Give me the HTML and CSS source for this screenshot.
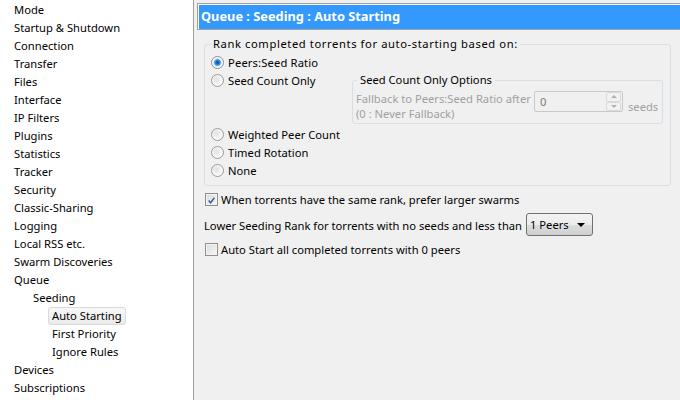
FILE: index.html
```html
<!DOCTYPE html>
<html>
<head>
<meta charset="utf-8">
<link rel="stylesheet" href="styles.css">
</head>
<body>
<div class="app">
  <ul class="tree">
    <li class="l0"><span>Mode</span></li>
    <li class="l0"><span>Startup &amp; Shutdown</span></li>
    <li class="l0"><span>Connection</span></li>
    <li class="l0"><span>Transfer</span></li>
    <li class="l0"><span>Files</span></li>
    <li class="l0"><span>Interface</span></li>
    <li class="l0"><span>IP Filters</span></li>
    <li class="l0"><span>Plugins</span></li>
    <li class="l0"><span>Statistics</span></li>
    <li class="l0"><span>Tracker</span></li>
    <li class="l0"><span>Security</span></li>
    <li class="l0"><span>Classic-Sharing</span></li>
    <li class="l0"><span>Logging</span></li>
    <li class="l0"><span>Local RSS etc.</span></li>
    <li class="l0"><span>Swarm Discoveries</span></li>
    <li class="l0"><span>Queue</span></li>
    <li class="l1"><span>Seeding</span></li>
    <li class="l2"><span class="sel">Auto Starting</span></li>
    <li class="l2"><span>First Priority</span></li>
    <li class="l2"><span>Ignore Rules</span></li>
    <li class="l0"><span>Devices</span></li>
    <li class="l0"><span>Subscriptions</span></li>
  </ul>
  <div class="main">
    <div class="title">Queue : Seeding : Auto Starting</div>
    <fieldset class="group">
      <legend>Rank completed torrents for auto-starting based on:</legend>
      <div class="opt"><span class="radio on"></span><span class="wide">Peers:Seed Ratio</span></div>
      <div class="seedrow">
        <div class="opt seedopt"><span class="radio"></span>Seed Count Only</div>
        <fieldset class="sub">
          <legend>Seed Count Only Options</legend>
          <div class="subrow">
            <div class="dis label">Fallback to Peers:Seed Ratio after<br>(0 : Never Fallback)</div>
            <div class="spin">
              <span class="val">0</span>
              <span class="btns"><span class="btn up"></span><span class="btn down"></span></span>
            </div>
            <div class="dis seeds">seeds</div>
          </div>
        </fieldset>
      </div>
      <div class="opt"><span class="radio"></span>Weighted Peer Count</div>
      <div class="opt"><span class="radio"></span>Timed Rotation</div>
      <div class="opt"><span class="radio"></span>None</div>
    </fieldset>
    <div class="row check-row first"><span class="check"><svg width="13" height="13" viewBox="0 0 13 13"><path d="M3.2 6.6 L5.4 9.2 L9.9 3.2" fill="none" stroke="#3a5a9e" stroke-width="1.7"/></svg></span>When torrents have the same rank, prefer larger swarms</div>
    <div class="row select-row">Lower Seeding Rank for torrents with no seeds and less than
      <div class="select"><span>1 Peers</span><span class="arrow"></span></div>
    </div>
    <div class="row check-row last"><span class="check"></span>Auto Start all completed torrents with 0 peers</div>
  </div>
</div>
</body>
</html>
```
FILE: styles.css
```css
html, body {
  margin: 0;
  padding: 0;
  background: #f0f0f0;
  overflow: hidden;
}
body {
  font-family: "Segoe UI", "Noto Sans", "Open Sans", sans-serif;
  font-size: 11.2px;
  color: #000;
}
.app {
  display: flex;
  height: 400px;
}
.tree {
  width: 194px;
  box-sizing: border-box;
  margin: 0;
  padding: 1px 0 0 0;
  list-style: none;
  background: #fff;
  border-right: 1px solid #a0a0a0;
  flex: none;
}
.tree li {
  height: 18px;
  display: flex;
  align-items: center;
  white-space: nowrap;
}
.tree li span {
  border: 1px solid transparent;
  padding: 0 3px;
  line-height: 16px;
  border-radius: 3px;
}
.tree .l0 { padding-left: 10px; }
.tree .l1 { padding-left: 29px; }
.tree .l2 { padding-left: 48px; }
.tree .sel {
  border-color: #d9d9d9;
  background: linear-gradient(#f8f8f8, #ebebeb);
}
.main {
  flex: 1;
  padding: 3px 0 0 3px;
  min-width: 0;
}
.title {
  height: 27px;
  box-sizing: border-box;
  border: 1px solid #a0a0a0;
  border-right: 0;
  background: #3399ff;
  box-shadow: inset 1px 1px 0 #ffffff;
  color: #fff;
  font-weight: bold;
  font-size: 12.8px;
  padding-left: 3px;
  line-height: 25px;
  white-space: nowrap;
}
fieldset {
  margin: 0;
  border: 1px solid #d5dfe5;
  border-radius: 3px;
  min-width: 0;
}
legend {
  line-height: 16px;
  white-space: nowrap;
}
.group {
  margin: 6px 9px 0 7px;
  padding: 1px 7px 6px 6px;
}
.group > legend {
  padding: 0 2px;
  letter-spacing: 0.6px;
}
.opt {
  height: 18px;
  display: flex;
  align-items: center;
  white-space: nowrap;
  padding-top: 1px;
  box-sizing: border-box;
}
.wide {
  letter-spacing: 0.15px;
}
.radio {
  width: 13px;
  height: 13px;
  box-sizing: border-box;
  border-radius: 50%;
  border: 1px solid #9a9a9a;
  background: radial-gradient(circle at 40% 40%, #e2e2e2 0, #ececec 3px, #f8f8f8 5px);
  margin-right: 4px;
  margin-top: -1px;
  flex: none;
}
.radio.on {
  border-color: #8c8e8f;
  background: radial-gradient(circle at 50% 50%, #0d4a8f 0, #1e6fc9 1.5px, #4aa3f2 3px, #9fd2ff 3.6px, #f4f4f4 4.2px, #ffffff 5.5px);
}
.seedrow {
  display: flex;
  align-items: flex-start;
  margin-bottom: 1px;
}
.seedopt {
  width: 141px;
  flex: none;
}
.sub {
  flex: 1;
  margin-top: 1px;
  padding: 2px 3px 2px 3px;
}
.sub > legend {
  margin-left: 1px;
  padding: 0 3px;
}
.subrow {
  display: flex;
  align-items: center;
}
.dis {
  color: #a0a0a0;
}
.label {
  width: 178px;
  flex: none;
  line-height: 15px;
  padding-top: 1px;
  white-space: nowrap;
}
.spin {
  align-self: flex-start;
  margin-top: 1px;
  width: 89px;
  height: 21px;
  box-sizing: border-box;
  border: 1px solid #c9c9c9;
  border-radius: 2px;
  display: flex;
  align-items: center;
  flex: none;
}
.spin .val {
  flex: 1;
  padding-left: 5px;
  color: #7a7a7a;
}
.btns {
  display: flex;
  flex-direction: column;
  width: 15px;
  height: 19px;
  margin-right: 1px;
}
.btn {
  flex: 1;
  border: 1px solid #dadada;
  border-radius: 2px;
  position: relative;
  background: #f2f2f2;
}
.btn::after {
  content: "";
  position: absolute;
  left: 4px;
  border-left: 3px solid transparent;
  border-right: 3px solid transparent;
}
.btn.up::after {
  top: 2px;
  border-bottom: 3px solid #b0b0b0;
}
.btn.down::after {
  top: 2px;
  border-top: 3px solid #b0b0b0;
}
.seeds {
  margin-left: 5px;
  padding-top: 1px;
}
.row {
  margin-left: 7px;
  display: flex;
  align-items: center;
  white-space: nowrap;
}
.check-row {
  height: 18px;
  padding-top: 1px;
  box-sizing: border-box;
}
.check-row.first {
  margin-top: 4px;
}
.check-row.last {
  margin-top: 4px;
}
.check {
  width: 13px;
  height: 13px;
  box-sizing: border-box;
  border: 1px solid #8f8f8f;
  background: linear-gradient(135deg, #dcdcdc, #f6f6f6);
  box-shadow: inset 0 0 0 1px #f4f4f4;
  margin: -1px 3px 0 1px;
  flex: none;
  display: flex;
}
.select-row {
  margin-top: 5px;
  height: 23px;
  padding-top: 1px;
  box-sizing: border-box;
}
.select {
  margin-left: 4px;
  margin-top: -1px;
  width: 67px;
  height: 23px;
  box-sizing: border-box;
  border: 1px solid #707070;
  border-radius: 3px;
  background: linear-gradient(#f3f3f3 0, #ebebeb 50%, #dddddd 51%, #cfcfcf 100%);
  display: flex;
  align-items: center;
  padding-left: 3px;
}
.select span:first-child {
  flex: 1;
}
.arrow {
  width: 0;
  height: 0;
  border-left: 4px solid transparent;
  border-right: 4px solid transparent;
  border-top: 4px solid #000;
  margin-right: 7px;
}
```
